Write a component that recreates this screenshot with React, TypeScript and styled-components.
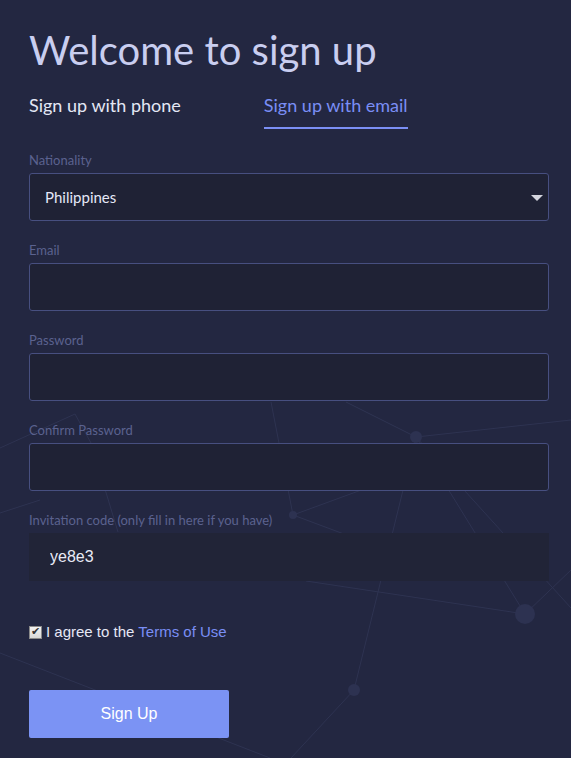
import React, { useState } from "react";
import styled, { createGlobalStyle } from "styled-components";

const GlobalStyle = createGlobalStyle`
  html, body {
    margin: 0;
    padding: 0;
    background: #232741;
  }
  * {
    box-sizing: border-box;
  }
`;

const lines: [number, number, number, number][] = [
  [0, 448, 75, 414],
  [75, 414, 91, 443],
  [91, 443, 118, 532],
  [0, 513, 40, 500],
  [271, 402, 293, 515],
  [346, 402, 416, 437],
  [416, 437, 571, 420],
  [293, 515, 416, 470],
  [293, 515, 360, 540],
  [416, 437, 354, 690],
  [416, 437, 525, 614],
  [416, 437, 600, 640],
  [306, 581, 525, 614],
  [525, 614, 571, 570],
  [354, 690, 291, 758],
  [0, 653, 270, 758],
];

const nodes: [number, number, number][] = [
  [416, 437, 6],
  [293, 515, 4],
  [525, 614, 10],
  [354, 690, 6],
];

const Network = () => (
  <NetworkSvg viewBox="0 0 571 758" preserveAspectRatio="none">
    {lines.map(([x1, y1, x2, y2], i) => (
      <line key={i} x1={x1} y1={y1} x2={x2} y2={y2} stroke="#2e3351" strokeWidth="1" />
    ))}
    {nodes.map(([cx, cy, r], i) => (
      <circle key={i} cx={cx} cy={cy} r={r} fill="#2d3251" />
    ))}
  </NetworkSvg>
);

const fields = [
  { label: "Email", type: "email" },
  { label: "Password", type: "password" },
  { label: "Confirm Password", type: "password" },
];

const App: React.FC = () => {
  const [tab, setTab] = useState("email");
  const [agree, setAgree] = useState(true);
  const [code, setCode] = useState("ye8e3");

  return (
    <Page>
      <GlobalStyle />
      <Network />
      <Form onSubmit={(e) => e.preventDefault()}>
        <Title>Welcome to sign up</Title>

        <Tabs>
          <Tab active={tab === "phone"} onClick={() => setTab("phone")}>
            Sign up with phone
          </Tab>
          <Tab active={tab === "email"} onClick={() => setTab("email")}>
            Sign up with email
          </Tab>
        </Tabs>

        <Field>
          <Label>Nationality</Label>
          <SelectWrap>
            <Select defaultValue="Philippines">
              <option>Philippines</option>
              <option>Indonesia</option>
              <option>Vietnam</option>
            </Select>
          </SelectWrap>
        </Field>

        {fields.map((f) => (
          <Field key={f.label}>
            <Label>{f.label}</Label>
            <Input type={f.type} />
          </Field>
        ))}

        <Field>
          <Label>Invitation code (only fill in here if you have)</Label>
          <CodeInput value={code} onChange={(e) => setCode(e.target.value)} />
        </Field>

        <Agree>
          <Check type="checkbox" checked={agree} onChange={() => setAgree(!agree)} />
          <span>
            I agree to the <TermsLink href="#">Terms of Use</TermsLink>
          </span>
        </Agree>

        <SubmitButton type="submit">Sign Up</SubmitButton>
      </Form>
    </Page>
  );
};

export default App;

const Page = styled.div`
  position: relative;
  min-height: 758px;
  background: #232741;
  overflow: hidden;
`;

const NetworkSvg = styled.svg`
  position: absolute;
  left: 0;
  top: 0;
  width: 571px;
  height: 758px;
  pointer-events: none;
`;

const Form = styled.form`
  position: relative;
  display: flex;
  flex-direction: column;
  padding: 22px 22px 20px 29px;
  font-family: "Lato", "Open Sans", sans-serif;
`;

const Title = styled.h1`
  margin: 0;
  font-size: 40px;
  font-weight: 400;
  line-height: 56px;
  color: #c9cef0;
`;

const Tabs = styled.div`
  display: flex;
  gap: 83px;
  margin-top: 15px;
  margin-bottom: 21px;
`;

const Tab = styled.div<{ active: boolean }>`
  cursor: pointer;
  font-size: 18px;
  line-height: 24px;
  padding-bottom: 10px;
  color: ${(props) => (props.active ? "#7a8ef5" : "#e4e7f5")};
  border-bottom: 2px solid ${(props) => (props.active ? "#7b8ff5" : "transparent")};
`;

const Field = styled.div`
  display: flex;
  flex-direction: column;
  margin-bottom: 19px;
`;

const Label = styled.label`
  font-size: 13px;
  line-height: 20px;
  color: #5b628f;
  margin-bottom: 3px;
`;

const Input = styled.input`
  height: 48px;
  width: 100%;
  padding: 0 15px;
  border: 1px solid #474f80;
  border-radius: 3px;
  background: #1f2235;
  color: #e5e8f8;
  font-family: inherit;
  font-size: 15px;
  outline: none;
`;

const SelectWrap = styled.div`
  position: relative;
  &::after {
    content: "";
    position: absolute;
    right: 6px;
    top: 22px;
    border-left: 6px solid transparent;
    border-right: 6px solid transparent;
    border-top: 6px solid #d4d5de;
    pointer-events: none;
  }
`;

const Select = styled.select`
  appearance: none;
  height: 48px;
  width: 100%;
  padding: 0 15px;
  border: 1px solid #474f80;
  border-radius: 3px;
  background: #1f2235;
  color: #e5e8f8;
  font-family: inherit;
  font-size: 15px;
  outline: none;
`;

const CodeInput = styled.input`
  height: 48px;
  width: 100%;
  padding: 0 20px;
  border: 1px solid #212437;
  background: #212437;
  color: #e8eaf6;
  font-family: "Liberation Sans", Arial, sans-serif;
  font-size: 16px;
  outline: none;
`;

const Agree = styled.label`
  display: flex;
  align-items: center;
  gap: 4px;
  margin-top: 23px;
  font-family: "Liberation Sans", Arial, sans-serif;
  font-size: 15px;
  line-height: 18px;
  color: #e6e8f5;
`;

const Check = styled.input`
  appearance: none;
  margin: 0;
  width: 13px;
  height: 13px;
  border: 1px solid #8a8a8a;
  background: linear-gradient(#f2f2f2, #d8d8d8);
  position: relative;
  cursor: pointer;
  &:checked::after {
    content: "✔";
    position: absolute;
    left: 1px;
    top: -2px;
    font-size: 11px;
    color: #333;
  }
`;

const TermsLink = styled.a`
  color: #7a8ef5;
  text-decoration: none;
`;

const SubmitButton = styled.button`
  margin-top: 49px;
  width: 200px;
  height: 48px;
  border: none;
  border-radius: 2px;
  background: #7b93f4;
  color: #ffffff;
  font-family: "Liberation Sans", Arial, sans-serif;
  font-size: 16px;
  cursor: pointer;
  &:hover {
    opacity: 0.9;
  }
`;
